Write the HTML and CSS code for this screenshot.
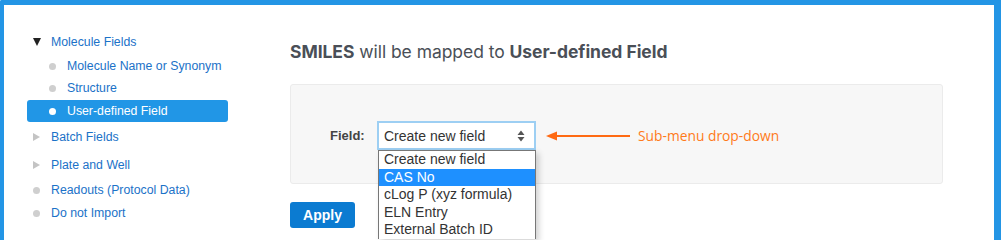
FILE: index.html
```html
<!DOCTYPE html>
<html>
<head>
<meta charset="utf-8">
<link rel="stylesheet" href="styles.css">
</head>
<body>
<div class="frame">
  <nav class="sidebar">
    <div class="item top r-mf"><span class="tri-down"></span><span class="lbl">Molecule Fields</span></div>
    <div class="item sub r-mn"><span class="dot"></span><span class="lbl">Molecule Name or Synonym</span></div>
    <div class="item sub r-st"><span class="dot"></span><span class="lbl">Structure</span></div>
    <div class="item sub active r-ud"><span class="dot"></span><span class="lbl">User-defined Field</span></div>
    <div class="item top r-bf"><span class="tri-right"></span><span class="lbl">Batch Fields</span></div>
    <div class="item top r-pw"><span class="tri-right"></span><span class="lbl">Plate and Well</span></div>
    <div class="item top r-ro"><span class="dot"></span><span class="lbl">Readouts (Protocol Data)</span></div>
    <div class="item top r-dn"><span class="dot"></span><span class="lbl">Do not Import</span></div>
  </nav>
  <main class="main">
    <h1 class="title"><b>SMILES</b> will be mapped to <b>User-defined Field</b></h1>
    <section class="panel">
      <div class="field-row">
        <label class="field-label">Field:</label>
        <div class="select">
          <span class="select-value">Create new field</span>
          <svg class="updown" width="8" height="12" viewBox="0 0 8 12"><path d="M4 0.5 L7.5 5 H0.5 Z M4 11.5 L7.5 7 H0.5 Z" fill="#555"/></svg>
          <ul class="listbox">
            <li>Create new field</li>
            <li class="hl">CAS No</li>
            <li>cLog P (xyz formula)</li>
            <li>ELN Entry</li>
            <li>External Batch ID</li>
          </ul>
        </div>
        <div class="callout">
          <svg class="arrow" width="84" height="12" viewBox="0 0 84 12"><path d="M0 6 L11 1.5 V10.5 Z" fill="#ff6a13"/><rect x="9" y="5" width="75" height="2" fill="#ff6a13"/></svg>
          <span class="callout-text">Sub-menu drop-down</span>
        </div>
      </div>
    </section>
    <button class="apply">Apply</button>
  </main>
</div>
</body>
</html>
```
FILE: styles.css
```css
html, body {
  margin: 0;
  padding: 0;
  height: 240px;
  overflow: hidden;
  background: #fff;
}
.frame {
  display: flex;
  height: 240px;
  border-top: 5px solid #2395e5;
  border-left: 4px solid #2395e5;
  border-right: 7px solid #2395e5;
  border-top-left-radius: 2px;
  box-sizing: border-box;
  font-family: "Liberation Sans", Arial, sans-serif;
  overflow: hidden;
}
.sidebar {
  width: 201px;
  margin-left: 23px;
  padding-top: 26px;
  display: flex;
  flex-direction: column;
}
.item {
  display: flex;
  align-items: center;
  height: 22px;
  font-size: 12.3px;
  color: #1b72c8;
  border-radius: 3px;
}
.item.top { padding-left: 6px; }
.item.sub { padding-left: 22px; }
.item .lbl { margin-left: 10px; }
.item.sub .lbl { margin-left: 11px; }
.r-mn { margin-top: 2px; }
.r-ud { margin-top: 1px; }
.r-bf { margin-top: 4px; }
.r-pw { margin-top: 6px; }
.r-ro { margin-top: 3px; }
.r-dn { margin-top: 1px; }
.item.active {
  background: #2196e6;
  color: #fff;
}
.dot {
  width: 7px;
  height: 7px;
  border-radius: 50%;
  background: #cfcfcf;
  flex: none;
}
.item.top .dot { margin-right: 1px; }
.item.active .dot { background: #fff; }
.tri-down {
  width: 0; height: 0;
  border-left: 4px solid transparent;
  border-right: 4px solid transparent;
  border-top: 8px solid #222;
  flex: none;
}
.tri-right {
  width: 0; height: 0;
  border-top: 4px solid transparent;
  border-bottom: 4px solid transparent;
  border-left: 7px solid #c4c4c4;
  margin-right: 1px;
  flex: none;
}
.main {
  margin-left: 62px;
  width: 653px;
  padding-top: 36px;
}
.title {
  margin: 0;
  font-family: Inter, "Liberation Sans", sans-serif;
  font-size: 17.5px;
  font-weight: 400;
  line-height: 22px;
  color: #4a4f57;
  letter-spacing: -0.05px;
}
.title b { font-weight: 700; }
.panel {
  margin-top: 21px;
  height: 100px;
  box-sizing: border-box;
  background: #f7f7f7;
  border: 1px solid #ebebeb;
  border-radius: 3px;
  padding-top: 36px;
}
.field-row {
  display: flex;
  align-items: center;
  height: 29px;
}
.field-label {
  margin-left: 39px;
  width: 35px;
  font-size: 13px;
  font-weight: 700;
  color: #444;
}
.select {
  position: relative;
  margin-left: 12px;
  width: 159px;
  height: 29px;
  box-sizing: border-box;
  border: 2px solid #9dcff3;
  background: #fff;
  display: flex;
  align-items: center;
  padding-left: 5px;
}
.select-value {
  font-size: 14px;
  color: #333;
  flex: 1;
}
.updown { margin-right: 9px; }
.listbox {
  position: absolute;
  left: -1px;
  top: 27px;
  width: 158px;
  margin: 0;
  padding: 0;
  list-style: none;
  background: #fff;
  border: 1px solid #777;
  border-bottom: none;
  box-sizing: border-box;
  box-shadow: 3px 3px 6px rgba(0,0,0,0.18);
  z-index: 5;
}
.listbox li {
  height: 17.6px;
  line-height: 17.6px;
  font-size: 14px;
  color: #333;
  padding-left: 5px;
}
.listbox li.hl {
  background: #1e90ff;
  color: #fff;
}
.callout {
  display: flex;
  align-items: center;
  margin-left: 10px;
}
.arrow { display: block; }
.callout-text {
  margin-left: 8px;
  font-family: "Open Sans", sans-serif;
  font-size: 13.8px;
  color: #ff7a1a;
}
.apply {
  margin-top: 18px;
  width: 65px;
  height: 26px;
  border: none;
  border-radius: 3px;
  background: #0b7bd1;
  color: #fff;
  font-family: "Liberation Sans", Arial, sans-serif;
  font-weight: 700;
  font-size: 14px;
  padding: 0;
}
```
